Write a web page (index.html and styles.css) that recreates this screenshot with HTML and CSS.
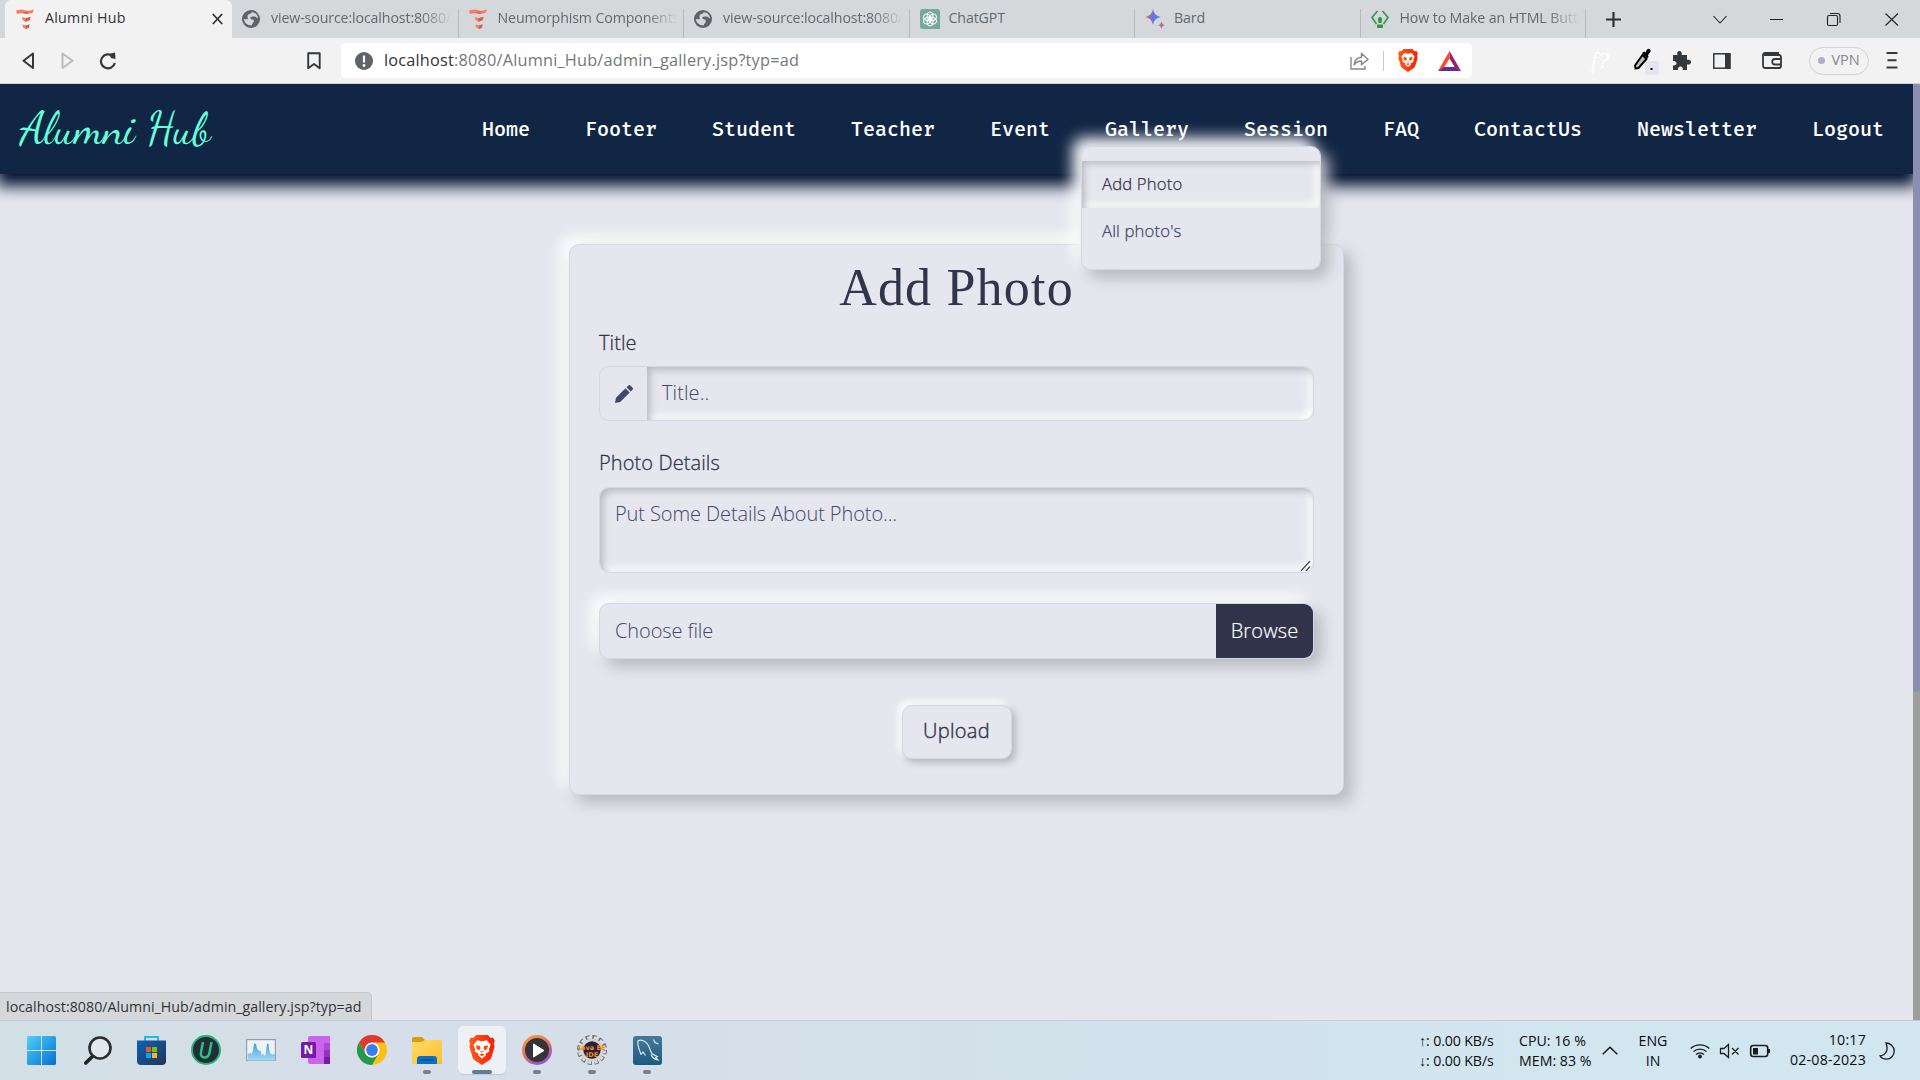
FILE: index.html
```html
<!DOCTYPE html>
<html lang="en">
<head>
<meta charset="utf-8">
<title>Alumni Hub</title>
<link rel="stylesheet" href="styles.css">
</head>
<body>
<svg class="defs" width="0" height="0" aria-hidden="true">
  <defs>
    <linearGradient id="gBard" x1="0" x2="1" y1="0" y2="0"><stop offset="0" stop-color="#e8734f"/><stop offset=".4" stop-color="#8a68d8"/><stop offset="1" stop-color="#1fa0ee"/></linearGradient>
    <linearGradient id="gWin" x1="0" y1="0" x2="1" y2="1"><stop offset="0" stop-color="#4fd0fb"/><stop offset="1" stop-color="#0670cf"/></linearGradient>
    <linearGradient id="gStore" x1="0" y1="0" x2="1" y2="1"><stop offset="0" stop-color="#0a63b5"/><stop offset="1" stop-color="#263257"/></linearGradient>
    <linearGradient id="gChart" x1="0" y1="0" x2="0" y2="1"><stop offset="0" stop-color="#3f9fe0"/><stop offset="1" stop-color="#a5dcf8"/></linearGradient>
    <linearGradient id="gFolder" x1="0" y1="0" x2="1" y2="1"><stop offset="0" stop-color="#ffdc68"/><stop offset="1" stop-color="#fbbf2c"/></linearGradient>
    <linearGradient id="gBrave" x1="0" y1="0" x2="1" y2="0"><stop offset="0" stop-color="#ff5a16"/><stop offset="1" stop-color="#f5200c"/></linearGradient>
    <linearGradient id="gMedia" x1="0" y1="0" x2=".5" y2="1"><stop offset="0" stop-color="#ff9a3c"/><stop offset=".5" stop-color="#e07858"/><stop offset="1" stop-color="#a050c8"/></linearGradient>
    <linearGradient id="gSql" x1="0" y1="0" x2="0" y2="1"><stop offset="0" stop-color="#45799a"/><stop offset="1" stop-color="#1d597f"/></linearGradient>
    <symbol id="themes" viewBox="0 0 18 20">
      <path d="M0 1.500 5.500.5 12 2l6-1.500L16.500 4l-5 1-5.500-1L1 5z" fill="#fb7a63"/><path d="m6 4 6-2-.5 3z" fill="#d96656"/>
      <path d="m6 8 3.500 1.200L14.500 8l-.8 3-4.200 1.700L6.500 11z" fill="#fb7a63"/><path d="m9.500 9.200 5-1.200-.8 3-4.200 1.700z" fill="#c95f55"/>
      <path d="m6.500 15.500 3.300 1 3.700-1-.5 3-3 1.500L7 18.500z" fill="#fb7a63"/><path d="m9.800 16.500 3.700-1-.5 3-3 1.500z" fill="#c95f55"/>
    </symbol>
    <symbol id="globe" viewBox="0 0 18 18">
      <circle cx="9" cy="9" r="9" fill="#5f6368"/>
      <path d="M9.500 2.200C13 2 16 5 16 8.500c-1.500-.6-2-2-3.500-2-1.300 0-2.800-.5-3.800.5-1 1.200.3 2.500 1.800 2.500 1.200 0 1.600 1 1.200 2.200-.5 1.500-1.700 1.700-2 3.800C5 15.500 2 12.500 2 9c2 .3 3.500.8 3.700-.5C6 6.500 4.500 6 6.500 4.500c1-.8 3-.8 3-2.300z" fill="#d4d8db"/>
    </symbol>
    <symbol id="brave" viewBox="0 0 24 28">
      <path d="M6.500 0h11l2.500 2.700 2.300-.4L24 5.500l-1 2.700.8 2.600-3 10c-.4 1.200-1 2-2 2.700L12 28l-6.800-4.500c-1-.7-1.600-1.500-2-2.700l-3-10L1 8.200 0 5.500l1.700-3.200 2.300.4z" fill="url(#gBrave)"/>
      <path d="M7.500 5 12 5.800 16.500 5 20 9l-1.500 4 .2 2.500-3.700 2.300.8 1.200L12 22l-3.800-3 .8-1.200-3.700-2.300.2-2.500L4 9z" fill="#fff"/>
      <path d="m6.500 9.500 3.800.8.2 3-1.500 1-2-1.300zM17.500 9.500l-3.800.8-.2 3 1.500 1 2-1.300zM10 15.200h4L12 16.500zM9.500 18.300l2.500-1 2.500 1-2.500 1.500z" fill="#ff4d10"/>
    </symbol>
  </defs>
</svg>

<header class="tabs">
  <div class="tab active"><svg class="ic w18" height="20"><use href="#themes"/></svg><span class="tt">Alumni Hub</span>
    <svg class="ic close" width="11" height="12" viewBox="0 0 11 12"><path d="m.8 1 9.400 10M10.200 1 .8 11" stroke="#303336" stroke-width="1.800"/></svg></div>
  <div class="tab first"><svg class="ic w18" height="18"><use href="#globe"/></svg><span class="tt fade">view-source:localhost:8080/</span></div>
  <div class="tab"><svg class="ic w18" height="20"><use href="#themes"/></svg><span class="tt fade">Neumorphism Components</span></div>
  <div class="tab"><svg class="ic w18" height="18"><use href="#globe"/></svg><span class="tt fade">view-source:localhost:8080/</span></div>
  <div class="tab"><svg class="ic" width="20" height="20" viewBox="0 0 20 20"><path d="M3 0h14a3 3 0 0 1 3 3v17H3a3 3 0 0 1-3-3V3a3 3 0 0 1 3-3z" fill="#75a99b"/><g fill="none" stroke="#fff" stroke-width="1"><ellipse cx="10" cy="6.800" rx="3" ry="3.800"/><ellipse cx="10" cy="6.800" rx="3" ry="3.800" transform="rotate(60 10 10)"/><ellipse cx="10" cy="6.800" rx="3" ry="3.800" transform="rotate(120 10 10)"/><ellipse cx="10" cy="6.800" rx="3" ry="3.800" transform="rotate(180 10 10)"/><ellipse cx="10" cy="6.800" rx="3" ry="3.800" transform="rotate(240 10 10)"/><ellipse cx="10" cy="6.800" rx="3" ry="3.800" transform="rotate(300 10 10)"/></g></svg><span class="tt short">ChatGPT</span></div>
  <div class="tab"><svg class="ic" width="20" height="20" viewBox="0 0 20 20"><path d="M8 0c1.300 5 3 7 8 8-5 1-6.700 3-8 8-1.300-5-3-7-8-8 5-1 6.700-3 8-8z" fill="url(#gBard)"/><path d="M16.500 12.500c.7 2.500 1.200 3.200 3.500 3.800-2.300.5-2.800 1.200-3.500 3.700-.7-2.500-1.200-3.200-3.500-3.700 2.300-.6 2.800-1.300 3.500-3.800z" fill="#c0688e"/></svg><span class="tt short">Bard</span></div>
  <div class="tab"><svg class="ic" width="18" height="18" viewBox="0 0 18 18"><path d="M6.500 1 1 7.500 5.500 14M11.500 1 17 7.500 12.500 14" fill="none" stroke="#35954a" stroke-width="1.600"/><path d="M9 7a2 2 0 0 1 2 2.500L10.500 13h-3L7 9.500A2 2 0 0 1 9 7zM6 14.500h6V18H6z" fill="#35954a"/></svg><span class="tt fade">How to Make an HTML Butt</span></div>
  <div class="tabend"></div>
  <svg class="ic plus" width="15" height="15" viewBox="0 0 15 15"><path d="M7.500 0v15M0 7.500h15" stroke="#303336" stroke-width="2.200"/></svg>
  <svg class="ic winbtns" width="188" height="16" viewBox="0 0 188 16" fill="none" stroke="#202224" stroke-width="1.100"><path d="m.5 5 6.500 7 6.500-7M57 8.500h13M172.500 2.500l12.500 12M185 2.500l-12.500 12"/><rect x="114.500" y="4.500" width="10" height="10" rx="1.500"/><path d="M117 2.500h7.500a2.500 2.500 0 0 1 2.500 2.500v7"/></svg>
</header>

<div class="toolbar">
  <svg class="ic nav1" width="100" height="20" viewBox="0 0 100 20" fill="none" stroke-width="2" stroke-linejoin="round"><path d="M12 2.500v14.500L2.500 9.700z" stroke="#35383b"/><path d="M41.500 2.500v14.500l10-7.300z" stroke="#b9bbbd"/><path d="M91.500 5a7 7 0 1 0 2.300 7" stroke="#35383b" stroke-width="2.200"/><path d="M88 3 94 1.500l.5 6.500-4.500-1z" fill="#35383b"/></svg>
  <svg class="ic bm" width="14" height="18" viewBox="0 0 14 18"><path d="M1.200 1.200h11.500v15L7 12l-5.800 4.200z" fill="none" stroke="#35383b" stroke-width="1.900" stroke-linejoin="round"/></svg>
  <div class="urlbox">
    <svg class="ic" width="18" height="18" viewBox="0 0 18 18"><circle cx="9" cy="9" r="9" fill="#5f6368"/><path d="M9 3.500v7" stroke="#fff" stroke-width="2.200"/><circle cx="9" cy="13.500" r="1.400" fill="#fff"/></svg>
    <span class="url"><b>localhost</b>:8080/Alumni_Hub/admin_gallery.jsp?typ=ad</span>
    <svg class="ic share" width="19" height="18" viewBox="0 0 19 18" fill="none" stroke="#858789" stroke-width="1.400"><path d="M1 5v12h14v-3"/><path d="M4 13c.5-5 3-7.500 7.500-7.700V1.500L18 7.300l-6.500 5.200V9C8 9 6 10 4 13z"/></svg>
    <i class="vsep"></i>
    <svg class="ic" width="20" height="23"><use href="#brave"/></svg>
    <svg class="ic bat" width="23" height="20" viewBox="0 0 23 20"><path d="M11.500 0 0 20l6-3.500 5.500-9z" fill="#ff4a25"/><path d="m11.500 0 11.500 20-6-3.500-5.500-9z" fill="#9e1f63"/><path d="m0 20 6-4h11l6 4z" fill="#662d91"/></svg>
  </div>
  <span class="fq">f?</span>
  <svg class="ic" width="27" height="28" viewBox="0 0 27 28"><rect x="12" y="14" width="14" height="14" rx="2" fill="#e4e5ef"/><path d="m9.500 8 4 4-8 9-3 .5-.5-3z" fill="#bcbcbc" stroke="#000" stroke-width="1.900"/><path d="m9 6 2-1.500 1.500 1L14 2.500c2-2 4.500 0 3.500 2.300L15 8l.5 2-1.500 1.500z" fill="#000"/><rect x="17.500" y="21" width="2" height="2"/></svg>
  <svg class="ic puz" width="19" height="19" viewBox="0 0 19 19"><path d="M1 4h4.500C4.700 1 6 0 7.500 0S10.300 1 9.700 4H15v5c3-.6 4 .8 4 2.200s-1 2.800-4 2.200V19h-4.300c.4-2.800-.7-3.500-2.200-3.500S5.800 16.500 6 19H1v-4.500c2.500.2 3.500-.8 3.500-2.200S3.500 9.800 1 10z" fill="#35383b"/></svg>
  <svg class="ic side" width="18" height="16" viewBox="0 0 18 16"><rect x=".8" y=".8" width="16" height="14.400" fill="none" stroke="#35383b" stroke-width="1.500"/><path d="M12 0h5.500v16H12z" fill="#35383b"/></svg>
  <svg class="ic wal" width="20" height="17" viewBox="0 0 20 17" fill="none" stroke="#35383b" stroke-width="1.800"><path d="M19 6.500V5a2 2 0 0 0-2-2H2M19 13v1a2 2 0 0 1-2 2H3a2 2 0 0 1-2-2V3a2 2 0 0 1 2-2h13v2"/><path d="M19 7h-6a2.700 2.700 0 0 0 0 5.500h6z"/></svg>
  <span class="vpn"><i></i>VPN</span>
  <svg class="ic menu" width="12" height="17" viewBox="0 0 12 17"><path d="M.5 1h11M1.500 8.200h9M.5 15.500h11" stroke="#35383b" stroke-width="1.900"/></svg>
</div>

<div class="viewport">
  <main class="page">
    <nav class="navbar">
      <a class="brand">Alumni Hub</a>
      <ul class="menu-items">
        <li>Home</li><li>Footer</li><li>Student</li><li>Teacher</li><li>Event</li>
        <li class="has-drop">Gallery
          <div class="dropdown"><a class="hover">Add Photo</a><a>All photo's</a></div>
        </li>
        <li>Session</li><li>FAQ</li><li>ContactUs</li><li>Newsletter</li><li>Logout</li>
      </ul>
    </nav>
    <form class="card">
      <h2>Add Photo</h2>
      <label>Title</label>
      <div class="group">
        <span class="addon"><svg width="18" height="18" viewBox="0 0 18 18"><path d="M0 18 1 12.800 10.500 3.300l4.200 4.200L5.200 17zM11.500 2.300 13.200.7a1.800 1.800 0 0 1 2.500 0l1.700 1.700a1.800 1.800 0 0 1 0 2.500L15.700 6.500z" fill="#44476a"/></svg></span>
        <span class="field">Title..</span>
      </div>
      <label class="second">Photo Details</label>
      <div class="area"><span>Put Some Details About Photo...</span><svg width="10" height="10" viewBox="0 0 10 10"><path d="M0 10 9 0M5 10l4-4.500" stroke="#444" stroke-width="1.200"/></svg></div>
      <div class="file"><span class="choose">Choose file</span><span class="browse">Browse</span></div>
      <button type="button" class="upload">Upload</button>
    </form>
    <div class="status">localhost:8080/Alumni_Hub/admin_gallery.jsp?typ=ad</div>
  </main>
  <div class="scroll"><i></i></div>
</div>

<footer class="taskbar">
  <div class="apps">
    <span><svg width="29" height="29" viewBox="0 0 29 29"><path d="M0 1.500Q0 0 1.500 0H14v14H0zM15 0h12.500Q29 0 29 1.500V14H15zM0 15h14v14H1.500Q0 29 0 27.500zM15 15h14v12.500q0 1.500-1.500 1.500H15z" fill="url(#gWin)"/></svg></span>
    <span class="s2"><svg width="28" height="29" viewBox="0 0 28 29"><path d="m1.800 27 8-8" stroke="#202326" stroke-width="3.600" stroke-linecap="round"/><circle cx="16" cy="12" r="10.500" fill="#e4e8ec" stroke="#2a2d30" stroke-width="2.600"/></svg></span>
    <span><svg width="29" height="29" viewBox="0 0 29 29"><path d="M8 5V1h13v4" fill="none" stroke="#29b6ee" stroke-width="2"/><path d="M0 4.500h29V25a4 4 0 0 1-4 4H4a4 4 0 0 1-4-4z" fill="url(#gStore)"/><path d="M9 11h5v5H9z" fill="#f35325"/><path d="M15 11h5v5h-5z" fill="#81bc06"/><path d="M9 17h5v5H9z" fill="#05a6f0"/><path d="M15 17h5v5h-5z" fill="#ffba08"/></svg></span>
    <span><svg width="30" height="30" viewBox="0 0 30 30"><circle cx="15" cy="15" r="14" fill="#252b3b" stroke="#22b472" stroke-width="2"/><path d="m12 7-2 10c-.8 4 1.500 5.500 3.500 5.500 3 0 4.500-2 5-5L20.500 7" fill="none" stroke="#20c77c" stroke-width="2.500"/></svg></span>
    <span><svg width="30" height="22" viewBox="0 0 30 22"><rect x=".6" y=".6" width="28.800" height="20.800" fill="#eef2f5" stroke="#94a0ad" stroke-width="1.200"/><path d="M1.500 15.500 4 14l1.500 1L7 12 8 4.500l2 .5 1 4.500 2 2.500 1.500-.5 1 4.500 2-1 1.500 2 1-4 1-8 1.500-.5.8 7 1.200 3 2 1 2.500-.5v6.500h-27z" fill="url(#gChart)"/></svg></span>
    <span><svg width="30" height="28" viewBox="0 0 30 28"><path d="M9 0h20v28H9a2 2 0 0 1-2-2V2a2 2 0 0 1 2-2z" fill="#ca64ea"/><path d="M23 7h6v7h-6z" fill="#ae4bd5"/><path d="M23 14h6v7h-6z" fill="#9332bf"/><path d="M23 21h6v7h-6z" fill="#7719aa"/><rect y="6" width="15" height="16" rx="1.500" fill="#7719aa"/><text x="7.500" y="18.300" text-anchor="middle" class="one">N</text></svg></span>
    <span><svg width="30" height="30" viewBox="0 0 30 30"><circle cx="15" cy="15" r="15" fill="#fbc116"/><path d="M2 7.500A15 15 0 0 1 28 7.500H15L8.500 18.700z" fill="#dc3b2e"/><path d="M2 7.500A15 15 0 0 0 15 30l6.500-11.300a7.500 7.500 0 0 1-13 0z" fill="#229a4d"/><circle cx="15" cy="15" r="7.500" fill="#fff"/><circle cx="15" cy="15" r="5.900" fill="#3a7cec"/></svg></span>
    <span class="run"><svg width="30" height="27" viewBox="0 0 30 27"><path d="M0 2a2 2 0 0 1 2-2h8l3 3v4H0z" fill="#dd9b0c"/><path d="M0 5h10l3-2h15a2 2 0 0 1 2 2v22H0z" fill="url(#gFolder)"/><path d="M5 27v-5a3 3 0 0 1 3-3h14a3 3 0 0 1 3 3v5z" fill="#0b6fc4"/><path d="M8 23h14" stroke="#064f96" stroke-width="1.500"/></svg></span>
    <span class="run on"><svg width="26" height="30"><use href="#brave"/></svg></span>
    <span class="run"><svg width="30" height="30" viewBox="0 0 30 30"><circle cx="15" cy="15" r="13.500" fill="#343438" stroke="url(#gMedia)" stroke-width="3"/><path d="M11.500 9v13L22 15.500z" fill="#fff" stroke="#fff" stroke-linejoin="round"/></svg></span>
    <span class="run"><svg width="30" height="30" viewBox="0 0 30 30"><circle cx="15" cy="15" r="12.700" fill="none" stroke="#686b6e" stroke-width="4.600" stroke-dasharray="4 2.650"/><circle cx="15" cy="15" r="12.500" fill="none" stroke="#dcdcdc" stroke-width="3" stroke-dasharray="3 3.650" stroke-dashoffset="-.5"/><circle cx="15" cy="15" r="10" fill="#25223d" stroke="#d4d4d4" stroke-width="2.600"/><text x="15" y="14.500" text-anchor="middle" textLength="27" class="jee">Java EE</text><text x="15" y="21.500" text-anchor="middle" class="jee">IDE</text></svg></span>
    <span class="run"><svg width="29" height="29" viewBox="0 0 29 29"><rect width="29" height="29" rx="3" fill="url(#gSql)"/><path d="M8 18.500C6.500 14 4 9 5 5c3.500-2.500 8.500 1 10.500 4.500 1.500 3 1.500 5.500 3.500 8 1.500 1.500 3.500 2 5.500 3l-2 1 2.500 2.500c-4-.5-6-3-7-5.500M8 18.500l2-2.500 2.500 3.500M20.500 3.500l1.500 3 3.500 1.500" fill="none" stroke="#dfeaf1" stroke-width="1.200"/></svg></span>
  </div>
  <div class="tray">
    <div class="two net"><span>↑: 0.00 KB/s</span><span>↓: 0.00 KB/s</span></div>
    <div class="two cpu"><span>CPU: 16 %</span><span>MEM: 83 %</span></div>
    <svg class="chev" width="16" height="9" viewBox="0 0 16 9"><path d="m.7 8.300 7.300-7 7.300 7" fill="none" stroke="#111" stroke-width="1.400"/></svg>
    <div class="two lang"><span>ENG</span><span>IN</span></div>
    <svg class="tri" width="80" height="16" viewBox="0 0 80 16" fill="none" stroke="#1b1d1f" stroke-width="1.300"><path d="M.7 5.500a14 14 0 0 1 18.600 0M3.500 8.500a10 10 0 0 1 13 0M6 11.500a6 6 0 0 1 8 0"/><circle cx="10" cy="13.500" r="1.300" fill="#1b1d1f"/><path d="M30.500 5.500h3.500L38.500 1.500v13L34 10.500h-3.500zM42 5l6.500 6.500M48.500 5 42 11.500"/><rect x="60.700" y="2.500" width="17" height="11" rx="2.500" stroke-width="1.600"/><path d="M63 5h5v6.500h-5z" fill="#1b1d1f" stroke="none"/><path d="M79 6v4" stroke-width="2"/></svg>
    <div class="two clock"><span>10:17</span><span>02-08-2023</span></div>
    <svg class="moon" width="16" height="18" viewBox="0 0 16 18"><path d="M7 1c4 0 8.200 3.500 8.200 8s-3.200 8.200-7.700 8.200c-3 0-5.300-1-6.500-3.400C6 13.500 10 9 7 1z" fill="none" stroke="#1b1d1f" stroke-width="1.300"/></svg>
  </div>
</footer>
</body>
</html>
```
FILE: styles.css
```css
* { box-sizing: border-box; }
body { margin: 0; width: 1920px; height: 1080px; overflow: hidden; display: flex; flex-direction: column; background: #e5e6ee; font-family: "Open Sans", "Noto Sans", sans-serif; }
.defs { position: absolute; }
.ic { flex: none; }
.w18 { width: 18px; }

/* Browser tab strip */
.tabs { height: 38px; flex: none; display: flex; align-items: center; background: #d4d8db; padding-left: 5px; }
.tab { width: 225.5px; height: 38px; flex: none; display: flex; align-items: center; gap: 11px; padding: 0 0 0 11px; color: #64686c; font-size: 14.2px; letter-spacing: -.12px; position: relative; }
.tab .tt { height: 38px; line-height: 36px; flex: 1; white-space: nowrap; }
.tab .short { margin-left: -2px; }
.tab::before { content: ""; position: absolute; left: 0; top: 9px; bottom: 0; width: 1px; background: #b6babd; }
.tab.first { padding-left: 10px; }
.tab.active { width: 227px; background: #f2f2f2; border-radius: 6px 6px 0 0; color: #303336; padding: 0 9px 0 11px; letter-spacing: .25px; }
.tab.active::before, .tab.first::before { display: none; }
.fade { -webkit-mask-image: linear-gradient(90deg, #000 80%, transparent 97%); mask-image: linear-gradient(90deg, #000 80%, transparent 97%); }
.tabend { width: 1px; height: 29px; margin-top: 9px; background: #b6babd; }
.plus { margin-left: 20px; }
.winbtns { margin-left: 92px; }

/* Browser toolbar */
.toolbar { height: 46px; flex: none; display: flex; align-items: center; background: #f2f2f2; border-bottom: 1px solid #cfd2d4; padding: 0 22px 0 21px; }
.bm { margin-left: 186px; }
.urlbox { width: 1132px; height: 35px; margin-left: 20px; padding: 0 11px 0 14px; background: #fff; border-radius: 5px; display: flex; align-items: center; }
.url { flex: 1; margin-left: 11px; color: #74777a; font-size: 16.3px; line-height: 33px; letter-spacing: .2px; }
.url b { color: #303336; font-weight: 400; }
.vsep { width: 1px; height: 20px; background: #c6c8ca; margin: 0 14px 0 14px; }
.bat { margin-left: 20px; }
.fq { width: 42px; margin-left: 119px; color: #fff; font: italic 23px/30px "Liberation Serif", serif; }
.puz { margin-left: 12px; }
.side { margin-left: 22px; }
.wal { margin-left: 31px; }
.vpn { width: 60px; height: 28px; margin-left: 27px; border: 1px solid #d0d2d5; border-radius: 14px; display: flex; align-items: center; justify-content: center; gap: 6px; color: #85898f; font-size: 14.5px; line-height: 24px; padding-bottom: 1px; }
.vpn i { width: 7px; height: 7px; border-radius: 50%; background: #adb0c5; }
.menu { margin-left: 17px; }

/* Web page */
.viewport { height: 936px; flex: none; display: flex; }
.page { flex: 1; display: flex; flex-direction: column; align-items: flex-start; overflow: hidden; background: #e5e6ee; }
.navbar { width: 100%; height: 90px; flex: none; display: flex; align-items: flex-start; justify-content: space-between; padding: 0 29px 0 20px; background: #112544; box-shadow: 0 8px 15px 4px #00102f; }
.brand { color: #64ffda; font: 44.8px/91px "Dancing Script", fantasy; white-space: nowrap; }
.menu-items { display: flex; gap: 55px; margin: 0; padding: 0; list-style: none; color: #fff; font: 500 20px/90px "Fira Mono", "Fira Code", "Liberation Mono", monospace; }
.has-drop { position: relative; }
.dropdown { position: absolute; z-index: 5; left: -24px; top: 62px; width: 240px; height: 124px; padding-top: 14px; border: 1px solid #d1d9e6; border-radius: 10px; background: #e5e6ee; box-shadow: 7.500px 7.500px 15px #b8b9be, -7.500px -7.500px 15px #fff; font: 300 16.700px/46px "Open Sans", "Noto Sans", sans-serif; }
.dropdown a { display: block; height: 47px; padding-left: 20px; color: #44476a; -webkit-text-stroke: .25px currentColor; letter-spacing: .15px; }
.dropdown .hover { color: #31344b; box-shadow: inset 2.500px 2.500px 6px #b8b9be, inset -4px -4px 9px #fff; }

.card { width: 775px; height: 551px; flex: none; margin: 70px 0 0 569px; padding: 13px 29px 0; border: 1px solid #d1d9e6; border-radius: 10px; background: #e5e6ee; box-shadow: 7.500px 7.500px 15px #b8b9be, -7.500px -7.500px 15px #fff; color: #31344b; font-size: 20px; font-weight: 300; display: flex; flex-direction: column; }
h2 { margin: 0; height: 60px; text-align: center; font: 400 52px/60px "Liberation Serif", serif; letter-spacing: 1.200px; }
label { margin-top: 10px; line-height: 30px; letter-spacing: .1px; -webkit-text-stroke: .3px currentColor; }
.second { margin-top: 27px; }
.group { height: 55px; flex: none; margin-top: 8px; display: flex; border: 1px solid #d1d9e6; border-radius: 10px; overflow: hidden; }
.addon { width: 47px; display: flex; align-items: center; justify-content: center; }
.field { flex: 1; padding-left: 15px; line-height: 52px; color: #44476a; letter-spacing: .1px; box-shadow: inset 3px 3px 7px #b8b9be, inset -4px -4px 9px #fff; border-radius: 0 10px 10px 0; }
.area { height: 86px; flex: none; margin-top: 9px; padding: 11px 2px 1px 15px; line-height: 30px; letter-spacing: -.1px; display: flex; justify-content: space-between; color: #44476a; border: 1px solid #d1d9e6; border-radius: 10px; box-shadow: inset 3px 3px 7px #b8b9be, inset -4px -4px 9px #fff; }
.area svg { align-self: flex-end; }
.file { height: 56px; flex: none; margin-top: 30px; display: flex; line-height: 53px; border: 1px solid #d1d9e6; border-radius: 10px; box-shadow: 7.500px 7.500px 15px #b8b9be, -7.500px -7.500px 15px #fff; }
.choose { flex: 1; padding-left: 15px; color: #44476a; letter-spacing: -.1px; }
.browse { width: 97px; text-align: center; background: #31344b; color: #fff; border-radius: 0 9px 9px 0; -webkit-text-stroke: .2px currentColor; letter-spacing: .15px; }
.upload { width: 110px; height: 54px; margin: 46px 0 0; align-self: center; padding: 0 0 3px; border: 1px solid #d1d9e6; border-radius: 10px; background: #e5e6ee; box-shadow: 3.500px 3.500px 7px #b8b9be, -3.500px -3.500px 7px #fff; color: #31344b; font: 300 20px "Open Sans", "Noto Sans", sans-serif; letter-spacing: .35px; -webkit-text-stroke: .4px currentColor; }
.status { width: 372px; height: 28px; margin-top: auto; padding-left: 6px; background: #d5d8db; border: solid #c3c6ca; border-width: 1px 1px 0 0; border-radius: 0 5px 0 0; color: #303336; font-size: 14.200px; line-height: 27px; letter-spacing: .05px; white-space: nowrap; }
.scroll { width: 7px; flex: none; background: #9e9e9e; position: relative; z-index: 6; }
.scroll i { display: block; height: 608px; background: #8a8fb2; border-radius: 4px; }

/* Desktop taskbar */
.taskbar { height: 60px; flex: none; display: flex; justify-content: space-between; background: linear-gradient(90deg, #d2dfe5, #d6dee9 20%, #d3e0ea 50%, #d2e6f0 80%); border-top: 1px solid #c7ccd5; }
.apps { display: flex; align-items: center; margin-left: 17px; }
.apps span { width: 48px; height: 48px; margin-right: 7.100px; margin-bottom: 1px; display: flex; align-items: center; justify-content: center; border-radius: 5px; position: relative; }
.apps .s2 svg { margin-left: 3px; }
.apps .run::after { content: ""; position: absolute; left: 20px; bottom: 0; width: 8px; height: 4px; border-radius: 2px; background: #7b8085; }
.apps .on { background: #edf1f6; box-shadow: 0 1px 1px #c2c8d1; }
.apps .on::after { left: 14px; width: 20px; background: #5d7d9b; }
.one { font: 700 12px "Open Sans", sans-serif; fill: #fff; }
.jee { font: 700 6.500px "DejaVu Sans", sans-serif; fill: #ff8a14; }
.tray { display: flex; align-items: center; color: #0c0d0e; font-size: 14.200px; line-height: 20px; padding-right: 25px; }
.two { display: flex; flex-direction: column; white-space: nowrap; }
.net { width: 100px; letter-spacing: -.12px; }
.cpu { width: 83px; letter-spacing: 0; }
.lang { width: 50px; margin-left: 10px; align-items: center; }
.tri { margin-left: 12px; }
.clock { width: 96px; align-items: flex-end; letter-spacing: .2px; padding-bottom: 2px; }
.moon { margin-left: 13px; }
```
